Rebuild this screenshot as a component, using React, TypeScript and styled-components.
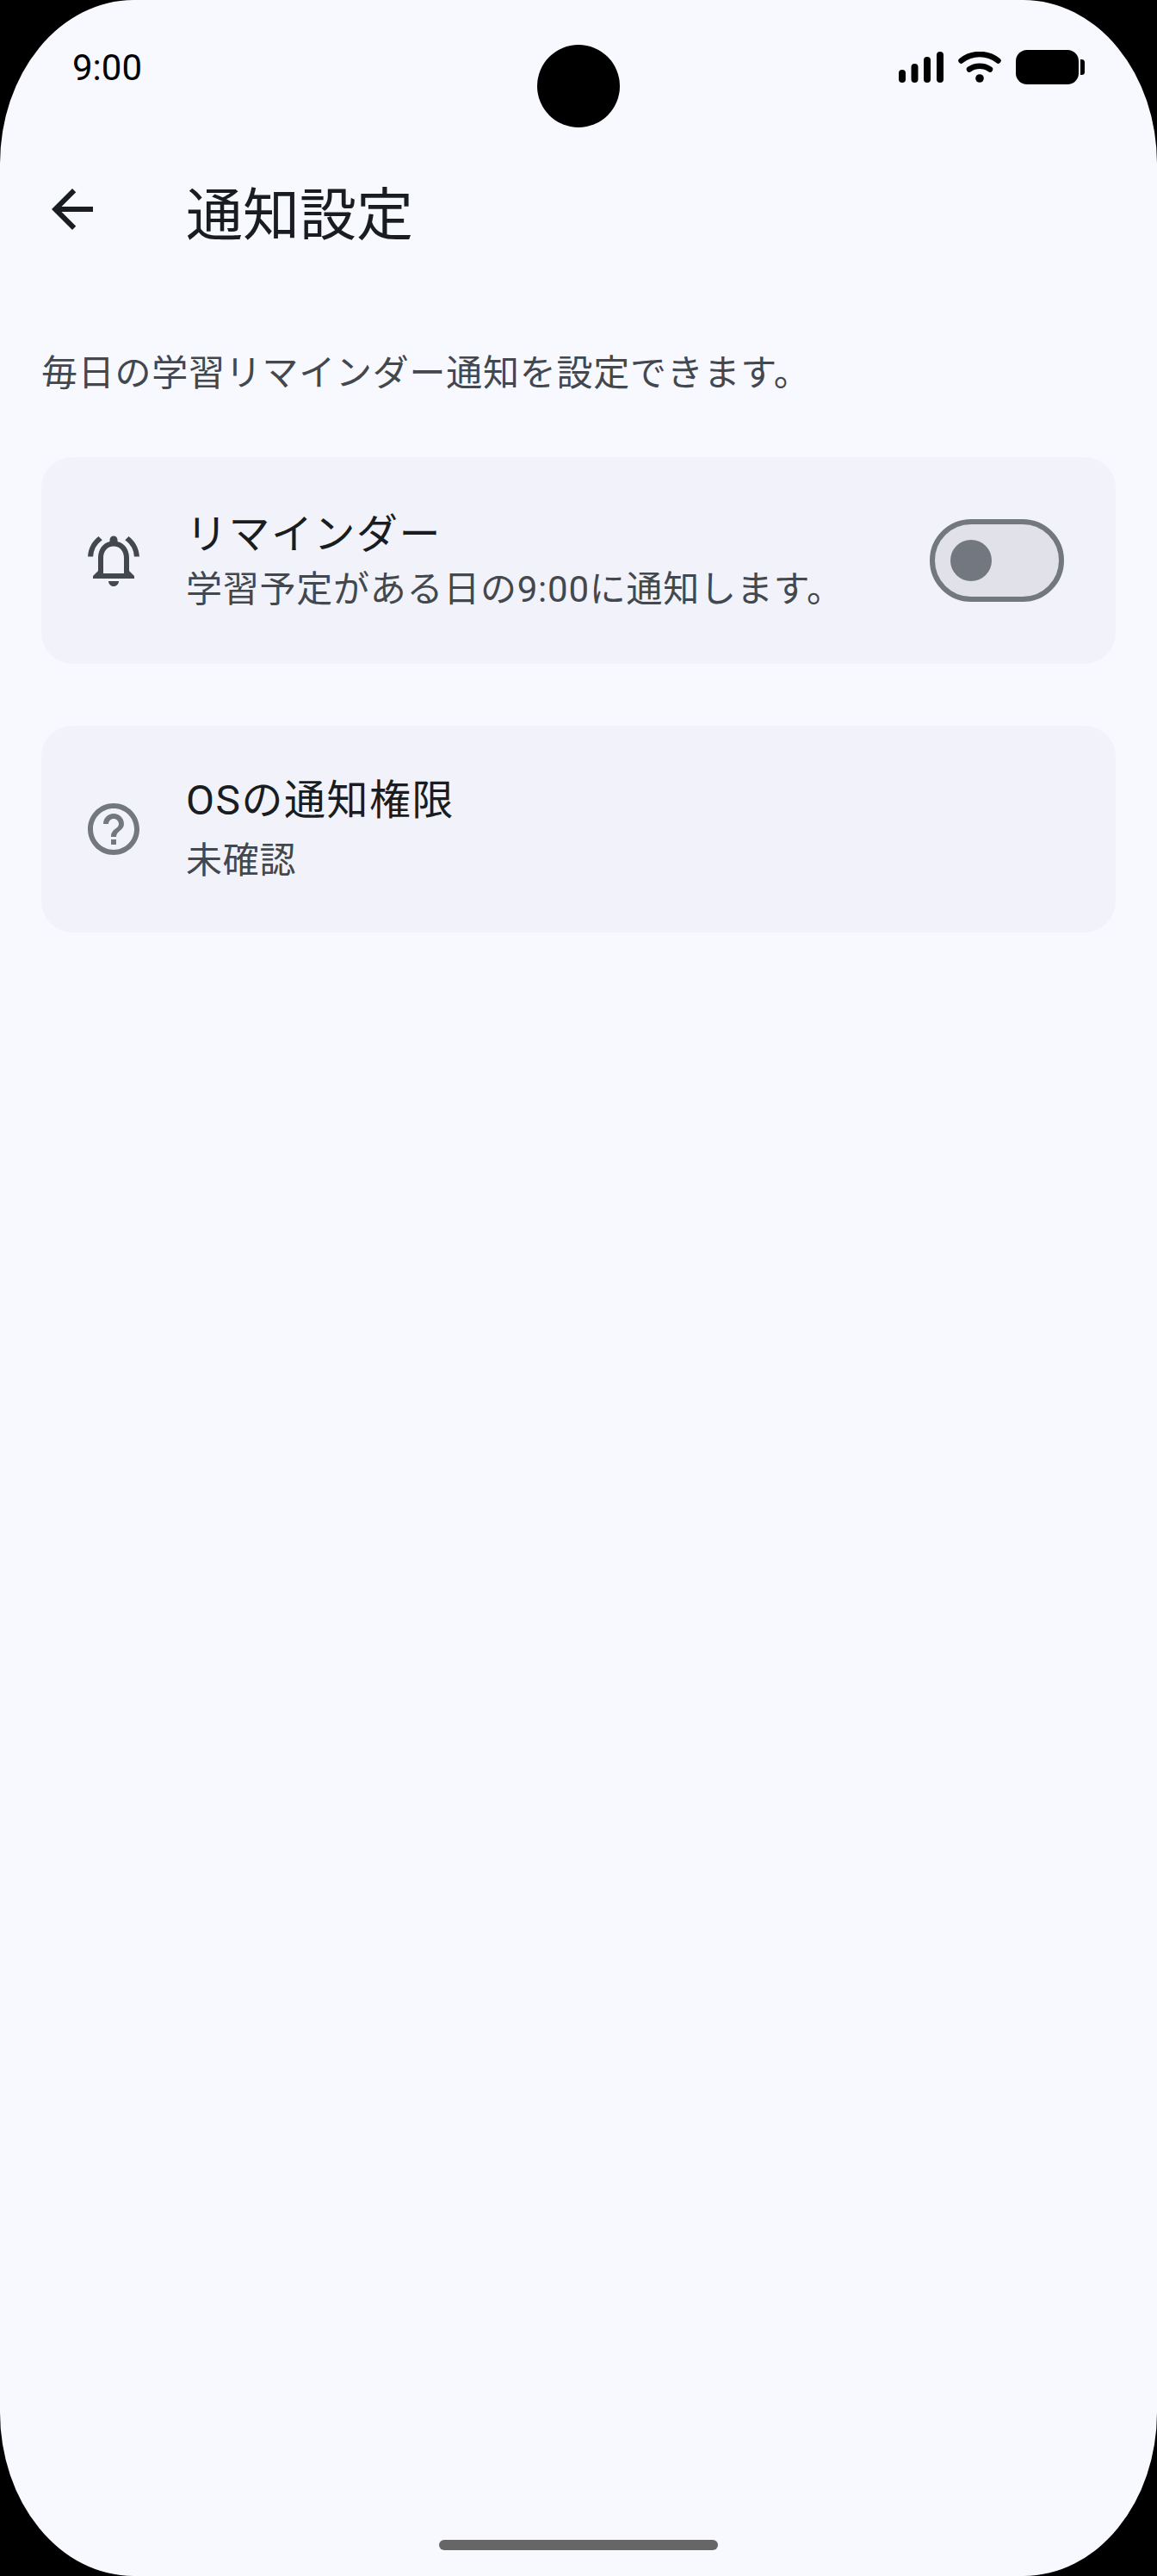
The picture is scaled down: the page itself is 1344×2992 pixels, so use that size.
import React from 'react';
import styled, { createGlobalStyle } from 'styled-components';
import { MdArrowBack, MdHelpOutline, MdOutlineNotificationsActive } from 'react-icons/md';

const GlobalStyle = createGlobalStyle`
    html, body {
        margin: 0;
        padding: 0;
        background: #000;
    }
    * {
        box-sizing: border-box;
    }
`;

const Screen = styled.div`
    position: relative;
    display: flex;
    flex-direction: column;
    width: 1344px;
    height: 2992px;
    overflow: hidden;
    background: #f8f9ff;
    border-radius: 155px / 190px;
    font-family: Roboto, "Noto Sans CJK JP", sans-serif;
    color: #191c20;
`;

const PunchHole = styled.div`
    position: absolute;
    top: 52px;
    left: 624px;
    width: 96px;
    height: 96px;
    border-radius: 50%;
    background: #000;
`;

const StatusBar = styled.div`
    display: flex;
    align-items: center;
    justify-content: space-between;
    height: 156px;
    padding: 0 84px;
`;

const Time = styled.span`
    margin-top: 2px;
    font-size: 42px;
    line-height: 60px;
    color: #000;
`;

const StatusIcons = styled.div`
    display: flex;
    align-items: center;
    gap: 17px;
`;

const TopBar = styled.header`
    display: flex;
    align-items: center;
    gap: 96px;
    height: 180px;
    padding: 0 0 0 48px;
`;

const BackIcon = styled(MdArrowBack)`
    display: block;
    width: 72px;
    height: 72px;
    color: #191c20;
    margin-top: -6px;
`;

const Title = styled.h1`
    margin: 10px 0 0;
    font-size: 66px;
    line-height: 84px;
    font-weight: 400;
    color: #191c20;
`;

const Content = styled.main`
    display: flex;
    flex-direction: column;
    flex: 1;
    padding: 68px 48px 0;
`;

const Description = styled.p`
    margin: 0 0 67px;
    font-size: 42px;
    line-height: 60px;
    letter-spacing: 0.75px;
    color: #43474e;
`;

const Card = styled.section`
    display: flex;
    align-items: center;
    height: 240px;
    margin-bottom: 72px;
    padding: 0 60px 0 48px;
    border-radius: 36px;
    background: #f2f3fa;
`;

const IconSlot = styled.div<{ $color: string }>`
    display: flex;
    flex-shrink: 0;
    width: 72px;
    height: 72px;
    margin-right: 48px;
    color: ${(props) => props.$color};

    svg {
        width: 72px;
        height: 72px;
    }
`;

const CardText = styled.div<{ $gap: number }>`
    display: flex;
    flex-direction: column;
    flex: 1;
    gap: ${(props) => props.$gap}px;
`;

const CardTitle = styled.div`
    font-size: 48px;
    line-height: 72px;
    letter-spacing: 1.5px;
    color: #191c20;
`;

const CardSub = styled.div`
    margin: -2px 0 2px;
    font-size: 42px;
    line-height: 60px;
    letter-spacing: 0.75px;
    color: #43474e;
`;

const SwitchTrack = styled.div`
    display: flex;
    align-items: center;
    flex-shrink: 0;
    width: 156px;
    height: 96px;
    padding-left: 18px;
    border: 6px solid #73777f;
    border-radius: 48px;
    background: #e1e2e9;
`;

const SwitchThumb = styled.div`
    width: 48px;
    height: 48px;
    border-radius: 50%;
    background: #73777f;
`;

const HomeBar = styled.div`
    align-self: center;
    width: 324px;
    height: 12px;
    margin-bottom: 30px;
    border-radius: 6px;
    background: #666;
`;

const SignalIcon = () => (
    <svg width="52" height="36" viewBox="0 0 52 36" fill="#000">
        <rect x="0" y="21" width="8" height="15" rx="4" />
        <rect x="14.5" y="14" width="8" height="22" rx="4" />
        <rect x="29" y="6" width="8" height="30" rx="4" />
        <rect x="44" y="0" width="8" height="36" rx="4" />
    </svg>
);

const WifiIcon = () => (
    <svg width="50" height="36" viewBox="0 0 50 36" fill="none" stroke="#000" strokeWidth="6.5" strokeLinecap="round">
        <path d="M3.5 10.5C16 0.5 34 0.5 46.5 10.5" />
        <path d="M13 20.5C20 15.5 30 15.5 37 20.5" />
        <circle cx="25" cy="31" r="4.8" fill="#000" stroke="none" />
    </svg>
);

const BatteryIcon = () => (
    <svg width="80" height="40" viewBox="0 0 80 40" fill="#000">
        <rect x="0" y="0" width="73" height="40" rx="13" />
        <path d="M75 11h1.5a3.5 3.5 0 0 1 3.5 3.5v11a3.5 3.5 0 0 1-3.5 3.5H75z" />
    </svg>
);

export default function App() {
    return (
        <>
            <GlobalStyle />
            <Screen>
                <PunchHole />
                <StatusBar>
                    <Time>9:00</Time>
                    <StatusIcons>
                        <SignalIcon />
                        <WifiIcon />
                        <BatteryIcon />
                    </StatusIcons>
                </StatusBar>
                <TopBar>
                    <BackIcon />
                    <Title>通知設定</Title>
                </TopBar>
                <Content>
                    <Description>毎日の学習リマインダー通知を設定できます。</Description>
                    <Card>
                        <IconSlot $color="#43474e">
                            <MdOutlineNotificationsActive />
                        </IconSlot>
                        <CardText $gap={0}>
                            <CardTitle>リマインダー</CardTitle>
                            <CardSub>学習予定がある日の9:00に通知します。</CardSub>
                        </CardText>
                        <SwitchTrack>
                            <SwitchThumb />
                        </SwitchTrack>
                    </Card>
                    <Card>
                        <IconSlot $color="#73777f">
                            <MdHelpOutline />
                        </IconSlot>
                        <CardText $gap={6}>
                            <CardTitle>OSの通知権限</CardTitle>
                            <CardSub>未確認</CardSub>
                        </CardText>
                    </Card>
                </Content>
                <HomeBar />
            </Screen>
        </>
    );
}
